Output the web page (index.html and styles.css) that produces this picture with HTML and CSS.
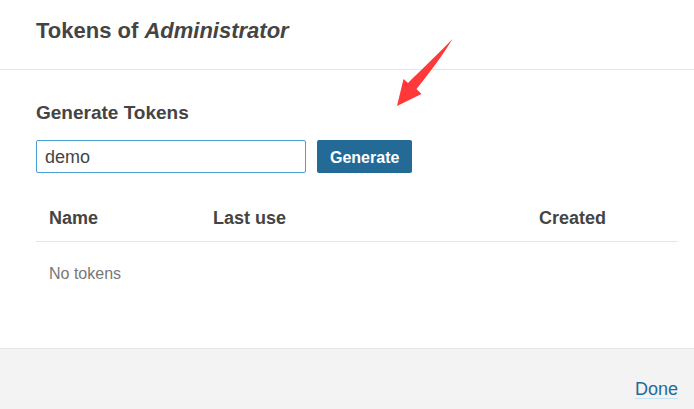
FILE: index.html
```html
<!DOCTYPE html>
<html lang="en">
<head>
<meta charset="utf-8">
<title>Tokens of Administrator</title>
<link rel="stylesheet" href="styles.css">
</head>
<body>
<main class="modal">
  <header class="modal-head"><h1>Tokens of <em>Administrator</em></h1></header>
  <section class="modal-body">
    <h2><label for="token-name">Generate Tokens</label></h2>
    <form class="token-form">
      <input id="token-name" type="text" value="demo">
      <button type="button">Generate</button>
      <svg class="arrow" viewBox="0 0 56 67" aria-hidden="true"><path d="M55.5 0C49 11 38 27 19.500 50L24.500 55 0 67 6.500 40 11 44C26 29 43 13 55.500 0Z"/></svg>
    </form>
    <table>
      <thead><tr><th class="name">Name</th><th>Last use</th><th class="created">Created</th></tr></thead>
      <tbody><tr><td colspan="3">No tokens</td></tr></tbody>
    </table>
  </section>
  <footer class="modal-foot"><a href="#">Done</a></footer>
</main>
</body>
</html>
```
FILE: styles.css
```css
* { box-sizing: border-box; }
body {
  margin: 0;
  background: #fff;
  color: #444;
  font-family: "Liberation Sans", Arial, sans-serif;
  font-size: 18px;
}
.modal {
  display: flex;
  flex-direction: column;
  min-height: 100vh;
  overflow: hidden;
}
.modal-head {
  padding: 17px 36px 24px;
  border-bottom: 1px solid #e6e6e6;
}
h1, h2 { margin: 0; font-weight: 700; }
h1 { font-size: 22px; line-height: 28px; }
h2 { font-size: 19px; line-height: 24px; margin-bottom: 15px; }
.modal-body { flex: 1; padding: 31px 16px 0 36px; }
.token-form {
  position: relative;
  display: flex;
  gap: 11px;
  margin-bottom: 24px;
}
.token-form input {
  width: 270px;
  height: 33px;
  padding: 2px 8px 0;
  border: 1px solid #4b9fd5;
  border-radius: 2px;
  color: #444;
  font: inherit;
  outline: none;
}
.token-form button {
  height: 33px;
  padding: 2px 13px 0;
  border: 0;
  border-radius: 2px;
  background: #236a97;
  color: #fff;
  font: 700 16px "Liberation Sans", Arial, sans-serif;
}
.arrow {
  position: absolute;
  left: 361px;
  top: -101px;
  width: 56px;
  height: 67px;
  fill: #ff3939;
}
table { width: 100%; border-collapse: collapse; table-layout: fixed; }
th {
  height: 44px;
  padding: 0 13px;
  border-bottom: 1px solid #e6e6e6;
  text-align: left;
  font-size: 18px;
}
.name { width: 164px; }
.created { width: 152px; }
td { height: 66px; padding: 0 13px; color: #777; font-size: 16px; }
.modal-foot {
  display: flex;
  justify-content: flex-end;
  height: 61px;
  padding: 30px 16px 0;
  border-top: 1px solid #e6e6e6;
  background: #f3f3f3;
}
.modal-foot a {
  height: 20px;
  border-bottom: 1px solid #cae3f2;
  color: #236a97;
  line-height: 20px;
  text-decoration: none;
}
```
